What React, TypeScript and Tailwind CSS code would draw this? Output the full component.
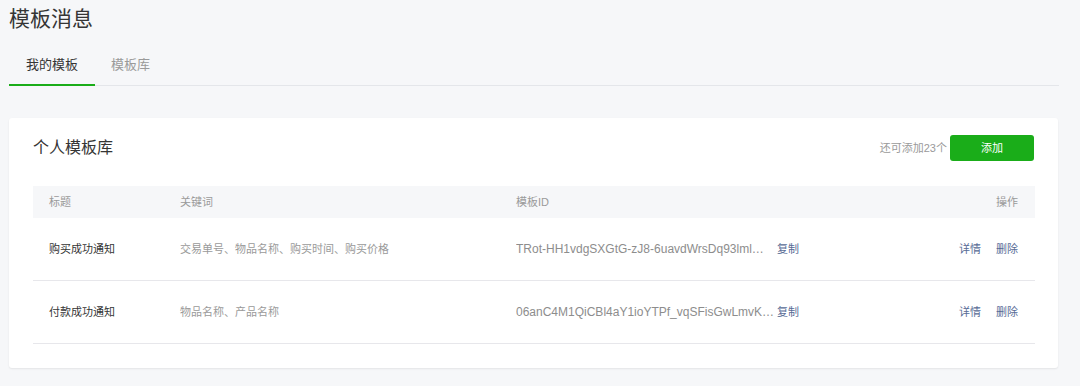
import React from "react";

const font = { fontFamily: '"Liberation Sans", "Noto Sans CJK SC", sans-serif' };

const rows = [
  {
    title: "购买成功通知",
    keywords: "交易单号、物品名称、购买时间、购买价格",
    id: "TRot-HH1vdgSXGtG-zJ8-6uavdWrsDq93lml…",
  },
  {
    title: "付款成功通知",
    keywords: "物品名称、产品名称",
    id: "06anC4M1QiCBl4aY1ioYTPf_vqSFisGwLmvK…",
  },
];

export default function App() {
  return (
    <div className="min-h-[386px] w-[1080px] bg-[#f6f7f9]" style={font}>
      <div className="ml-[9px] w-[1050px]">
        <div className="pt-[5px] h-[33px] text-[21px] leading-[28px] text-[#353535]">模板消息</div>
        <div className="mt-[11px] flex border-b border-[#e4e6ea]">
          <div className="relative px-[17px] h-[41px] flex items-center text-[13px] text-[#353535]">
            我的模板
            <div className="absolute left-0 right-0 -bottom-px h-[2px] bg-[#1aad19]" />
          </div>
          <div className="px-[16px] h-[41px] flex items-center text-[13px] text-[#9a9a9a]">模板库</div>
        </div>
        <div className="mt-[32px] w-[1049px] bg-white rounded-[3px] shadow-[0_1px_2px_rgba(0,0,0,0.08)] px-6 pt-[17px] pb-[24px]">
          <div className="flex items-center justify-between h-[26px]">
            <div className="text-[16px] text-[#353535]">个人模板库</div>
            <div className="flex items-center">
              <span className="text-[11px] text-[#9a9a9a] mr-[3px]">还可添加23个</span>
              <button className="w-[84px] h-[26px] rounded-[3px] bg-[#1aad19] text-white text-[11px]">添加</button>
            </div>
          </div>
          <div className="mt-[25px] w-[1002px]">
            <div className="flex items-center h-8 bg-[#f6f7f9] text-[11px] text-[#9a9a9a]">
              <div className="w-[147px] pl-4">标题</div>
              <div className="w-[336px]">关键词</div>
              <div className="flex-1">模板ID</div>
              <div className="pr-[17px]">操作</div>
            </div>
            {rows.map((r) => (
              <div key={r.title} className="flex items-center h-[63px] border-b border-[#e7e7eb] text-[11px]">
                <div className="w-[147px] pl-4 text-[#353535]">{r.title}</div>
                <div className="w-[336px] text-[#9a9a9a]">{r.keywords}</div>
                <div className="w-[261px] text-[12px] text-[#8d8d8d] whitespace-nowrap overflow-hidden">{r.id}</div>
                <div className="flex-1 text-[#576b95]">复制</div>
                <div className="flex gap-[15px] pr-[17px] text-[#576b95]">
                  <span>详情</span>
                  <span>删除</span>
                </div>
              </div>
            ))}
          </div>
        </div>
      </div>
    </div>
  );
}
